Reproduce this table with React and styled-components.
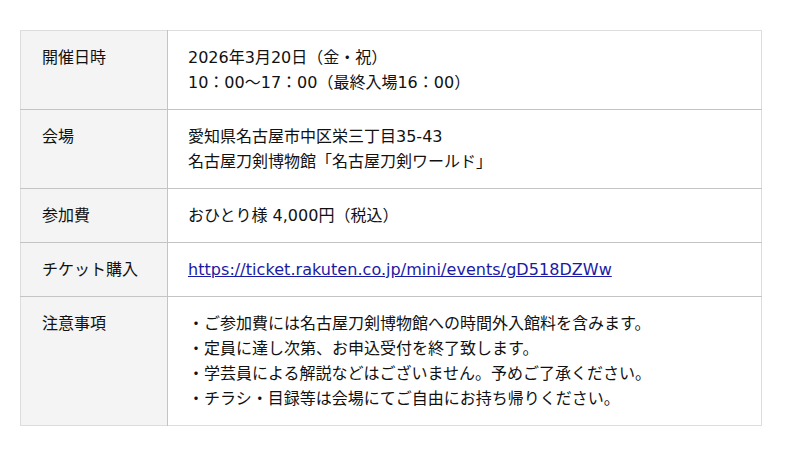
import React from 'react'
import styled, { createGlobalStyle } from 'styled-components'

const GlobalStyle = createGlobalStyle`
  body {
    margin: 0;
    background: #fff;
    font-family: "DejaVu Sans", "Noto Sans CJK JP", sans-serif;
    color: #111;
  }
`

const Page = styled.div`
  padding: 30px 38px 30px 20px;
`

const Table = styled.table`
  width: 742px;
  border-collapse: collapse;
  border: 1px solid #ddd;
  font-size: 16px;
  line-height: 25px;
`

const Row = styled.tr`
  border-bottom: 1px solid #c4c4c4;
  &:last-child {
    border-bottom: 1px solid #ddd;
  }
`

const Head = styled.th`
  width: 147px;
  box-sizing: border-box;
  padding: 14px 20px 14px 21px;
  background: #f4f4f4;
  border-right: 1px solid #c4c4c4;
  text-align: left;
  vertical-align: top;
  font-weight: normal;
`

const Cell = styled.td`
  padding: 14px 20px;
  vertical-align: top;
`

const Link = styled.a`
  color: #1a1aa6;
  text-decoration: underline;
  letter-spacing: 0.05px;
`

const rows = [
  ['開催日時', ['2026年3月20日（金・祝）', '10：00〜17：00（最終入場16：00）']],
  ['会場', ['愛知県名古屋市中区栄三丁目35-43', '名古屋刀剣博物館「名古屋刀剣ワールド」']],
  ['参加費', ['おひとり様 4,000円（税込）']],
  ['チケット購入', null],
  [
    '注意事項',
    [
      '・ご参加費には名古屋刀剣博物館への時間外入館料を含みます。',
      '・定員に達し次第、お申込受付を終了致します。',
      '・学芸員による解説などはございません。予めご了承ください。',
      '・チラシ・目録等は会場にてご自由にお持ち帰りください。',
    ],
  ],
]

export default function App() {
  return (
    <Page>
      <GlobalStyle />
      <Table>
        <tbody>
          {rows.map(([label, lines]) => (
            <Row key={label}>
              <Head>{label}</Head>
              <Cell>
                {lines ? (
                  lines.map((l, i) => <div key={i}>{l}</div>)
                ) : (
                  <Link href="#">https://ticket.rakuten.co.jp/mini/events/gD518DZWw</Link>
                )}
              </Cell>
            </Row>
          ))}
        </tbody>
      </Table>
    </Page>
  )
}
